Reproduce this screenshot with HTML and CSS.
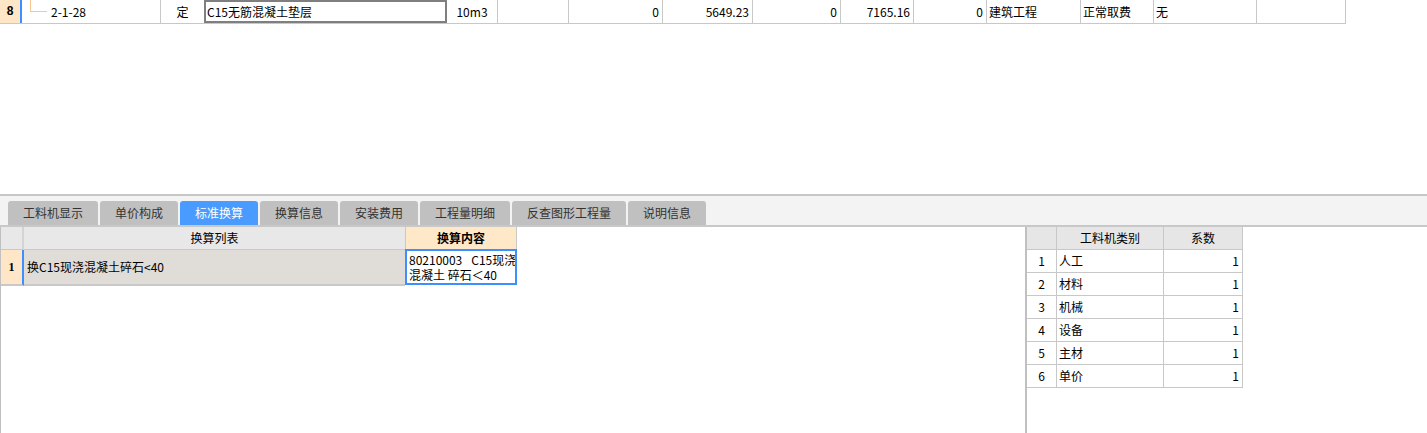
FILE: index.html
```html
<!DOCTYPE html>
<html lang="zh">
<head>
<meta charset="utf-8">
<title>标准换算</title>
<link rel="stylesheet" href="styles.css">
</head>
<body>
<div class="app">
  <div class="top-pane">
    <div class="main-row">
      <div class="c rn">8</div>
      <div class="c code"><span class="tree"></span>2-1-28</div>
      <div class="c type">定</div>
      <div class="c name">C15无筋混凝土垫层</div>
      <div class="c unit">10m3</div>
      <div class="c w71"></div>
      <div class="c num w94">0</div>
      <div class="c num w90">5649.23</div>
      <div class="c num w88">0</div>
      <div class="c num w73">7165.16</div>
      <div class="c num w73">0</div>
      <div class="c txt w94">建筑工程</div>
      <div class="c txt w73">正常取费</div>
      <div class="c txt w103">无</div>
      <div class="c w89"></div>
    </div>
  </div>
  <div class="splitter"></div>
  <div class="tabbar">
    <div class="tab">工料机显示</div>
    <div class="tab">单价构成</div>
    <div class="tab active">标准换算</div>
    <div class="tab">换算信息</div>
    <div class="tab">安装费用</div>
    <div class="tab">工程量明细</div>
    <div class="tab">反查图形工程量</div>
    <div class="tab">说明信息</div>
  </div>
  <div class="bottom">
    <div class="left-pane">
      <div class="lhead">
        <div class="lcorner"></div>
        <div class="lh1">换算列表</div>
        <div class="lh2">换算内容</div>
      </div>
      <div class="lrow">
        <div class="lrn">1</div>
        <div class="llist">换C15现浇混凝土碎石&lt;40</div>
        <div class="lcontent">
          <div class="cline">80210003<span class="gap">C15现浇</span></div>
          <div class="cline">混凝土 碎石＜40</div>
        </div>
      </div>
    </div>
    <div class="vdiv"></div>
    <div class="right-pane">
      <div class="rrow rhead">
        <div class="r1"></div>
        <div class="r2 center">工料机类别</div>
        <div class="r3 center">系数</div>
      </div>
      <div class="rrow"><div class="r1">1</div><div class="r2">人工</div><div class="r3">1</div></div>
      <div class="rrow"><div class="r1">2</div><div class="r2">材料</div><div class="r3">1</div></div>
      <div class="rrow"><div class="r1">3</div><div class="r2">机械</div><div class="r3">1</div></div>
      <div class="rrow"><div class="r1">4</div><div class="r2">设备</div><div class="r3">1</div></div>
      <div class="rrow"><div class="r1">5</div><div class="r2">主材</div><div class="r3">1</div></div>
      <div class="rrow"><div class="r1">6</div><div class="r2">单价</div><div class="r3">1</div></div>
    </div>
  </div>
</div>
</body>
</html>
```
FILE: styles.css
```css
html, body {
  margin: 0;
  padding: 0;
}
body {
  width: 1427px;
  height: 433px;
  overflow: hidden;
  background: #ffffff;
  font: 12px "Noto Sans CJK SC", "Liberation Sans", sans-serif;
  color: #000;
}
.app {
  display: flex;
  flex-direction: column;
  height: 433px;
}
.top-pane {
  height: 194px;
  flex: none;
}
.main-row {
  display: flex;
  width: 1346px;
  height: 24px;
  box-sizing: border-box;
  border-bottom: 1px solid #c8c8c8;
}
.c {
  box-sizing: border-box;
  height: 23px;
  line-height: 23px;
  border-right: 1px solid #c8c8c8;
  white-space: nowrap;
  overflow: hidden;
  flex: none;
}
.rn {
  width: 22px;
  background: #ffe6c6;
  border-right: 2px solid #3d8eff;
  text-align: center;
  font-weight: bold;
  font-family: "Liberation Sans", sans-serif;
}
.code {
  width: 139px;
  padding-left: 29px;
  position: relative;
}
.tree {
  position: absolute;
  left: 8px;
  top: 0;
  width: 16px;
  height: 11px;
  border-left: 1px solid #f6c88e;
  border-bottom: 1px solid #f6c88e;
}
.type {
  width: 43px;
  text-align: center;
  border-right: none;
}
.name {
  width: 243px;
  border: 2px solid #7f7f7f;
  line-height: 19px;
  padding-left: 1px;
}
.unit {
  width: 51px;
  text-align: center;
}
.num {
  text-align: right;
  padding-right: 3px;
}
.txt {
  padding-left: 2px;
}
.w71 { width: 71px; }
.w73 { width: 73px; }
.w88 { width: 88px; }
.w89 { width: 89px; }
.w90 { width: 90px; }
.w94 { width: 94px; }
.w103 { width: 103px; }

.splitter {
  height: 2px;
  flex: none;
  background: #c6c6c6;
}
.tabbar {
  height: 31px;
  flex: none;
  box-sizing: border-box;
  background: #f3f3f3;
  border-bottom: 2px solid #c8c8c8;
  display: flex;
  align-items: flex-end;
  gap: 2px;
  padding-left: 8px;
}
.tab {
  height: 24px;
  line-height: 24px;
  padding: 0 15px;
  background: #c0c0c0;
  color: #333;
  border-radius: 3px 3px 0 0;
  white-space: nowrap;
}
.tab.active {
  background: #4a9bff;
  color: #fff;
}

.bottom {
  flex: 1;
  display: flex;
  min-height: 0;
}
.left-pane {
  width: 1025px;
  flex: none;
  box-sizing: border-box;
  border-left: 1px solid #c0c0c0;
}
.vdiv {
  width: 2px;
  flex: none;
  background: #c0c0c0;
}
.right-pane {
  flex: 1;
}

.lhead {
  display: flex;
  height: 23px;
}
.lhead > div {
  box-sizing: border-box;
  height: 23px;
  line-height: 22px;
  border-bottom: 1px solid #c8c8c8;
  flex: none;
}
.lcorner {
  width: 23px;
  background: #e8e8e8;
  border-right: 2px solid #d4d4d4;
}
.lh1 {
  width: 382px;
  background: #e8e8e8;
  text-align: center;
  border-right: 1px solid #c8c8c8;
}
.lh2 {
  width: 111px;
  background: #ffe8c8;
  text-align: center;
  font-weight: bold;
  border-right: 1px solid #c8c8c8;
}
.lrow {
  display: flex;
  height: 36px;
}
.lrn {
  box-sizing: border-box;
  width: 23px;
  height: 36px;
  line-height: 34px;
  background: #ffe6c6;
  border-right: 2px solid #3d8eff;
  border-bottom: 2px solid #c8c8c8;
  text-align: center;
  font-weight: bold;
  font-family: "Liberation Serif", serif;
  flex: none;
}
.llist {
  box-sizing: border-box;
  width: 381px;
  height: 36px;
  line-height: 34px;
  background: #e0dcd8;
  border-bottom: 2px solid #c8c8c8;
  padding-left: 3px;
  flex: none;
}
.lcontent {
  box-sizing: border-box;
  width: 112px;
  height: 36px;
  margin-top: -1px;
  border: 2px solid #3d8eff;
  padding: 1px 0 0 2px;
  background: #fff;
  overflow: hidden;
  flex: none;
}
.cline {
  height: 15px;
  line-height: 15px;
  white-space: nowrap;
}
.gap {
  margin-left: 9px;
}

.rrow {
  display: flex;
  height: 23px;
}
.rrow > div {
  box-sizing: border-box;
  height: 23px;
  line-height: 22px;
  border-right: 1px solid #c8c8c8;
  border-bottom: 1px solid #c8c8c8;
  flex: none;
}
.rhead > div {
  background: #e6e6e6;
}
.r1 {
  width: 30px;
  text-align: center;
}
.r2 {
  width: 107px;
  padding-left: 2px;
}
.r3 {
  width: 79px;
  text-align: right;
  padding-right: 3px;
}
.rrow > .center {
  text-align: center;
  padding: 0;
}
```
